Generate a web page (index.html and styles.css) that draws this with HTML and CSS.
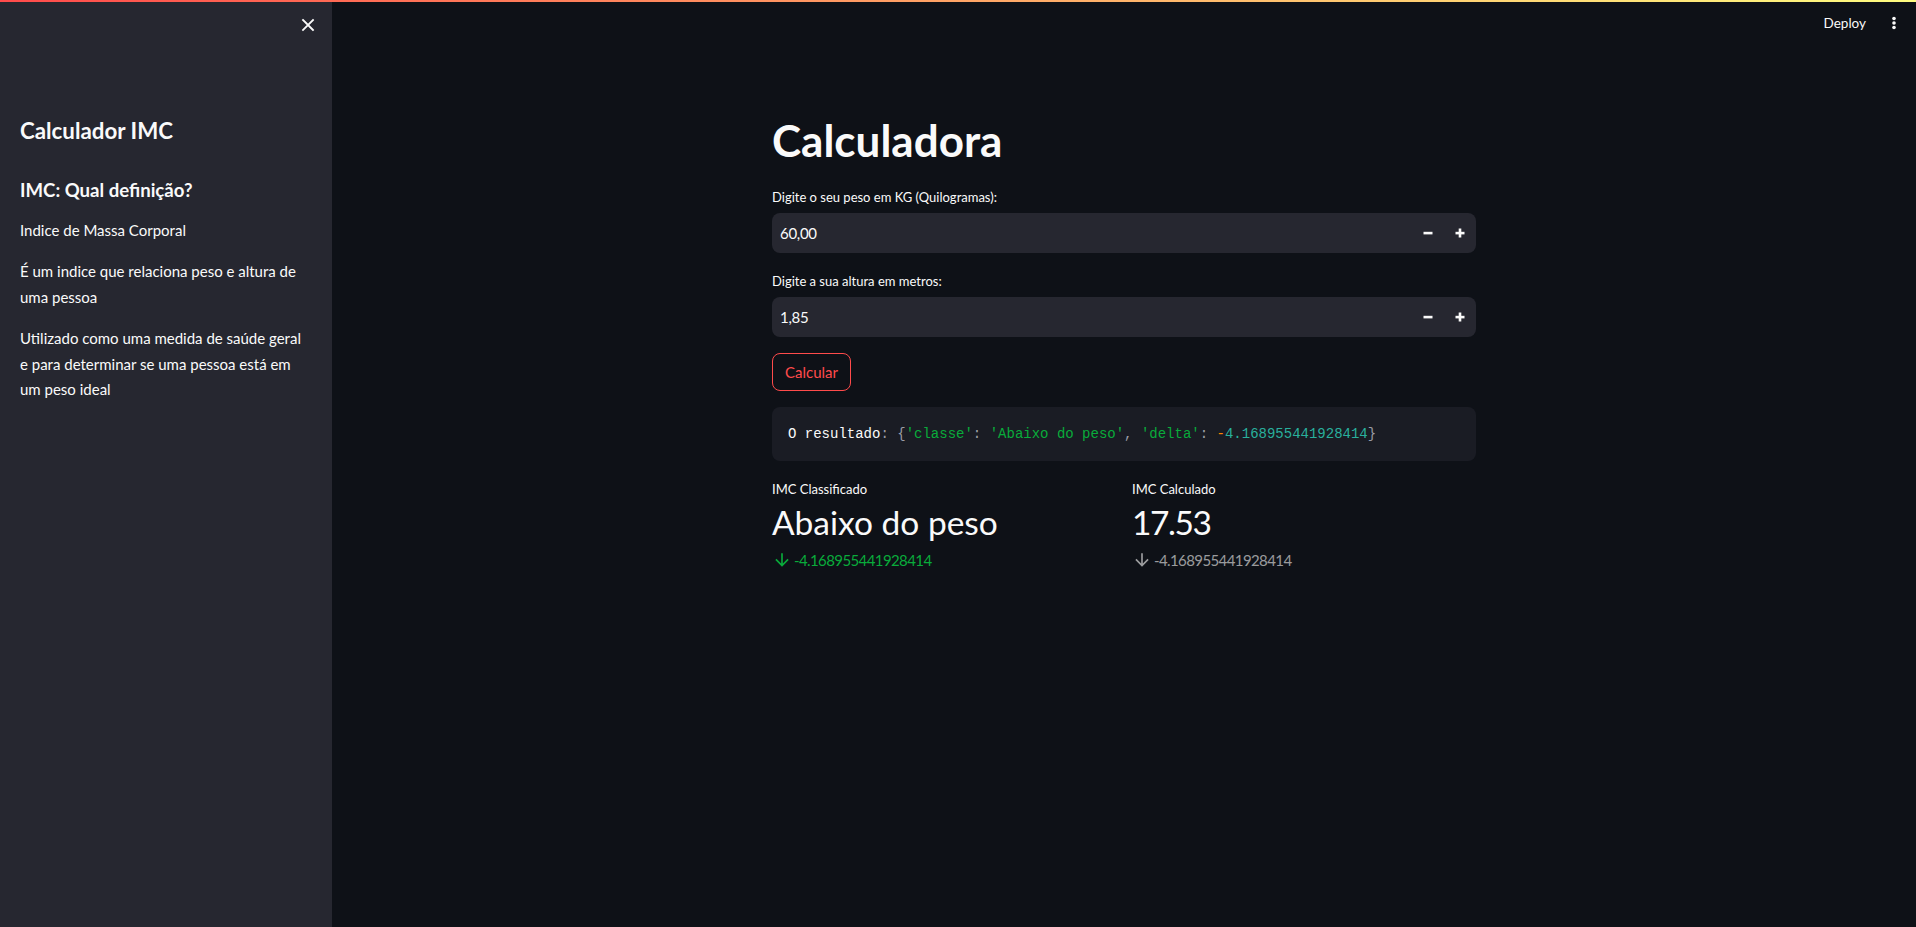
FILE: index.html
```html
<!DOCTYPE html>
<html lang="pt">
<head>
<meta charset="utf-8">
<title>Calculadora IMC</title>
<link rel="stylesheet" href="styles.css">
</head>
<body>
<div class="deco"></div>
<div class="app">
  <aside class="sidebar">
    <div class="sb-top">
      <button class="close" aria-label="Fechar">
        <svg width="14" height="14" viewBox="0 0 14 14"><path d="M2 2L12 12M12 2L2 12" stroke="#fafafa" stroke-width="1.8" stroke-linecap="square"/></svg>
      </button>
    </div>
    <div class="sb-content">
      <h1 class="sb-title">Calculador IMC</h1>
      <h3 class="sb-sub">IMC: Qual definição?</h3>
      <p>Indice de Massa Corporal</p>
      <p>É um indice que relaciona peso e altura de uma pessoa</p>
      <p>Utilizado como uma medida de saúde geral e para determinar se uma pessoa está em um peso ideal</p>
    </div>
  </aside>
  <main class="main">
    <header class="topbar">
      <span class="deploy">Deploy</span>
      <span class="kebab">
        <svg width="6" height="16" viewBox="0 0 6 16"><circle cx="3" cy="3.5" r="1.8" fill="#fafafa"/><circle cx="3" cy="8" r="1.8" fill="#fafafa"/><circle cx="3" cy="12.5" r="1.8" fill="#fafafa"/></svg>
      </span>
    </header>
    <div class="block">
      <h1 class="title">Calculadora</h1>

      <div class="field">
        <div class="field-label">Digite o seu peso em KG (Quilogramas):</div>
        <div class="num">
          <span class="num-value">60,00</span>
          <span class="step"><svg width="10" height="10" viewBox="0 0 10 10"><rect x="0.5" y="3.8" width="9" height="2.6" fill="#fafafa"/></svg></span>
          <span class="step"><svg width="10" height="10" viewBox="0 0 10 10"><rect x="0.5" y="3.8" width="9" height="2.6" fill="#fafafa"/><rect x="3.7" y="0.5" width="2.6" height="9" fill="#fafafa"/></svg></span>
        </div>
      </div>

      <div class="field">
        <div class="field-label">Digite a sua altura em metros:</div>
        <div class="num">
          <span class="num-value">1,85</span>
          <span class="step"><svg width="10" height="10" viewBox="0 0 10 10"><rect x="0.5" y="3.8" width="9" height="2.6" fill="#fafafa"/></svg></span>
          <span class="step"><svg width="10" height="10" viewBox="0 0 10 10"><rect x="0.5" y="3.8" width="9" height="2.6" fill="#fafafa"/><rect x="3.7" y="0.5" width="2.6" height="9" fill="#fafafa"/></svg></span>
        </div>
      </div>

      <div class="btn-row"><button class="btn">Calcular</button></div>

      <div class="code"><span class="c-txt">O resultado</span><span class="c-pun">: {</span><span class="c-str">'classe'</span><span class="c-pun">: </span><span class="c-str">'Abaixo do peso'</span><span class="c-pun">, </span><span class="c-str">'delta'</span><span class="c-pun">: </span><span class="c-op">-</span><span class="c-num">4.168955441928414</span><span class="c-pun">}</span></div>

      <div class="metrics">
        <div class="metric">
          <div class="m-label">IMC Classificado</div>
          <div class="m-value">Abaixo do peso</div>
          <div class="m-delta green">
            <svg width="20" height="20" viewBox="0 0 24 24"><path d="M20 12l-1.41-1.41L13 16.17V4h-2v12.17l-5.58-5.59L4 12l8 8 8-8z" fill="currentColor"/></svg>
            <span>-4.168955441928414</span>
          </div>
        </div>
        <div class="metric">
          <div class="m-label">IMC Calculado</div>
          <div class="m-value digits">17.53</div>
          <div class="m-delta off">
            <svg width="20" height="20" viewBox="0 0 24 24"><path d="M20 12l-1.41-1.41L13 16.17V4h-2v12.17l-5.58-5.59L4 12l8 8 8-8z" fill="currentColor"/></svg>
            <span>-4.168955441928414</span>
          </div>
        </div>
      </div>
    </div>
  </main>
</div>
</body>
</html>
```

FILE: styles.css
```css
* { box-sizing: border-box; margin: 0; padding: 0; }
html, body { height: 100%; }
body {
  background: #0e1117;
  color: #fafafa;
  font-family: Lato, "Noto Sans", sans-serif;
  overflow: hidden;
}
.deco {
  position: fixed;
  top: 0; left: 0; right: 0;
  height: 2px;
  background: linear-gradient(90deg, #ff4b4b, #fffd80);
  z-index: 10;
}
.app { display: flex; height: 100vh; }

.sidebar { width: 332px; flex: none; background: #262730; }
.sb-top {
  height: 50px;
  display: flex;
  justify-content: flex-end;
  align-items: center;
  padding-right: 12px;
}
.close {
  width: 24px; height: 24px;
  display: flex; align-items: center; justify-content: center;
  background: none; border: 0;
}
.sb-content {
  padding: 67px 20px 0;
  display: flex;
  flex-direction: column;
  gap: 16px;
}
.sb-title { font-size: 22.3px; font-weight: 700; line-height: 28px; }
.sb-sub { font-size: 18.6px; font-weight: 700; line-height: 24px; margin-top: 16.5px; }
.sb-content p { font-size: 15px; line-height: 25.6px; }

.main { flex: 1; display: flex; flex-direction: column; min-width: 0; }
.topbar {
  height: 60px;
  display: flex;
  justify-content: flex-end;
  align-items: flex-start;
  padding: 11px 10px 0 0;
  gap: 16px;
}
.deploy { font-size: 13.5px; line-height: 24px; }
.kebab { width: 24px; height: 24px; display: flex; align-items: center; justify-content: center; }

.block {
  width: 704px;
  margin: 0 auto;
  padding-top: 36px;
  display: flex;
  flex-direction: column;
  gap: 16px;
}
.title { font-size: 44px; font-weight: 700; line-height: 52.8px; padding: 18px 0 2px; }

.field-label { font-size: 13px; line-height: 24px; margin-bottom: 4px; }
.num {
  height: 40px;
  background: #262730;
  border-radius: 8px;
  display: flex;
  align-items: center;
}
.num-value { flex: 1; padding-left: 8px; font-size: 15px; letter-spacing: -0.3px; }
.step { width: 32px; height: 40px; display: flex; align-items: center; justify-content: center; }

.btn-row { display: flex; }
.btn {
  height: 38px;
  padding: 0 12px;
  border: 1px solid #ff4b4b;
  border-radius: 8px;
  color: #ff4b4b;
  background: transparent;
  font-family: inherit;
  font-size: 15px;
}

.code {
  height: 54px;
  background: #1a1c24;
  border-radius: 8px;
  padding: 16px;
  font-family: "Liberation Mono", monospace;
  font-size: 14px;
  line-height: 22px;
  white-space: pre;
}
.c-txt { color: #fafafa; }
.c-pun { color: #9a9ca6; }
.c-str { color: #09ab3b; }
.c-op { color: #ff8700; }
.c-num { color: #29b09d; }

.metrics { display: grid; grid-template-columns: 1fr 1fr; gap: 16px; }
.m-label { font-size: 13px; line-height: 24px; }
.m-value { font-size: 33.5px; line-height: 42px; padding-bottom: 5px; }
.digits { letter-spacing: -1.4px; }
.m-delta { display: flex; align-items: center; gap: 2px; font-size: 15px; letter-spacing: -0.6px; line-height: 24px; }
.green { color: #09ab3b; }
.off { color: rgba(250, 250, 250, 0.6); }
```
